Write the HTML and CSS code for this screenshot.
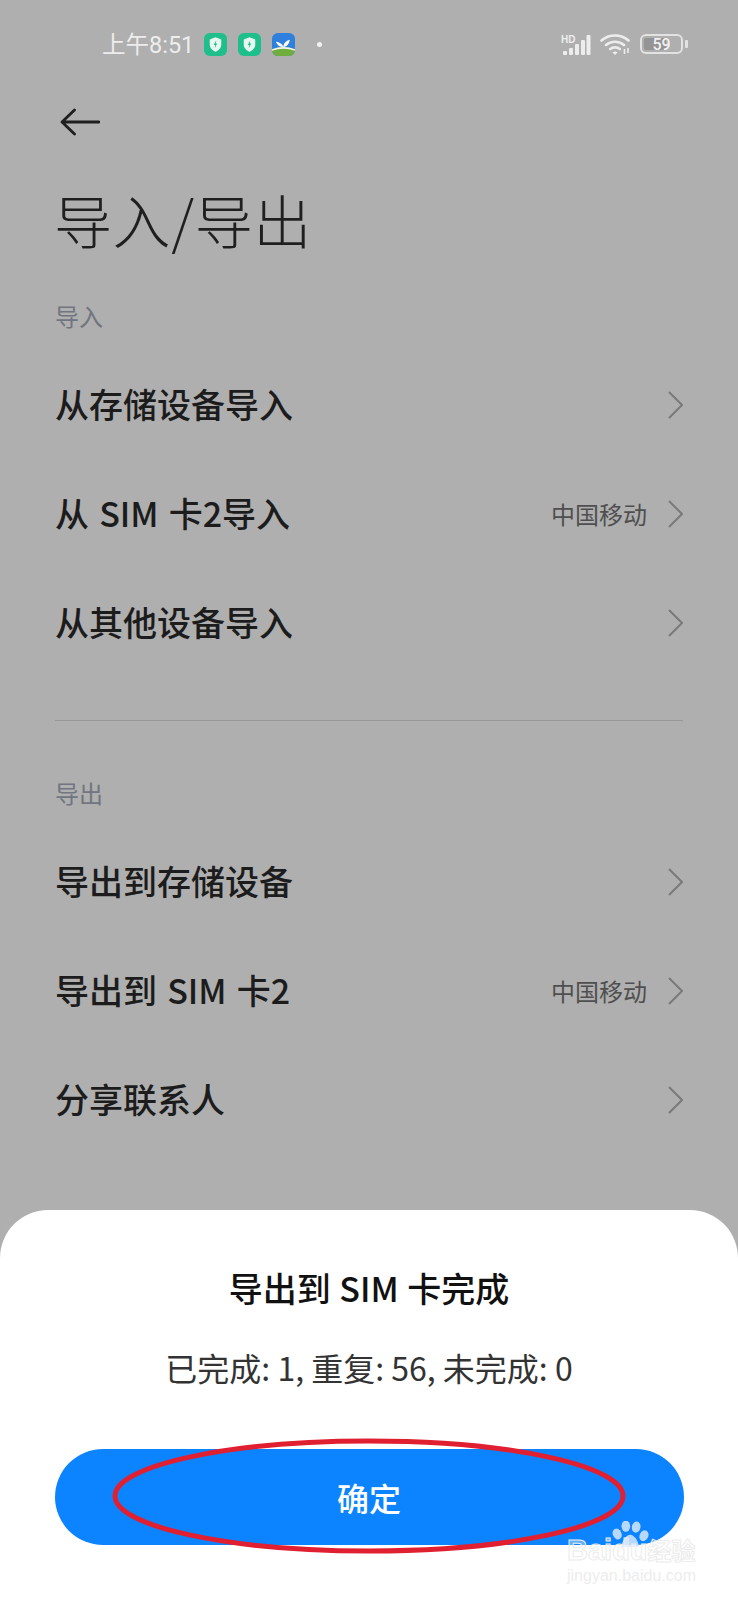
FILE: index.html
```html
<!DOCTYPE html>
<html lang="zh-CN">
<head>
<meta charset="utf-8">
<title>导入/导出</title>
<link rel="stylesheet" href="styles.css">
</head>
<body>
<div class="screen">
  <header class="status">
    <span class="time">上午8:51</span>
    <svg class="app" viewBox="0 0 24 24"><rect width="24" height="24" rx="6" fill="#1fbf8c"/><path d="M12 4.500l6 2.200v5.200c0 3.600-2.600 6-6 7.600-3.400-1.600-6-4-6-7.600V6.700z" fill="#e8f7f1"/><path d="M12.800 7.500l-2.600 5h1.500l-.5 3.500 2.600-5h-1.500z" fill="#1fbf8c"/></svg>
    <svg class="app" viewBox="0 0 24 24"><rect width="24" height="24" rx="6" fill="#1fbf8c"/><path d="M12 4.500l6 2.200v5.200c0 3.600-2.600 6-6 7.600-3.400-1.600-6-4-6-7.600V6.700z" fill="#e8f7f1"/><path d="M12.800 7.500l-2.600 5h1.500l-.5 3.500 2.600-5h-1.500z" fill="#1fbf8c"/></svg>
    <svg class="app" viewBox="0 0 24 24"><defs><clipPath id="r"><rect width="24" height="24" rx="6"/></clipPath></defs><g clip-path="url(#r)"><rect width="24" height="24" fill="#2f80dc"/><path d="M0 17q12-5 24 0v7H0z" fill="#6fae3c"/><path d="M0 17q12-5 24 0v1.500q-12-4-24 0z" fill="#f2f5ee"/><path d="M12 14.500c-1-3-4-5-8-5.500 1.500 3.500 4 5.500 8 5.500zM12 14.500c0-3 1.500-6 6.500-7.500-.5 4-2.500 7-6.500 7.500z" fill="#fff"/></g></svg>
    <span class="dot"></span>
    <span class="status-right">
      <svg class="signal" viewBox="0 0 30 21"><text x="0" y="8.500" class="hd">HD</text><rect x="2" y="17" width="4" height="4" rx="1"/><rect x="8" y="14" width="4" height="7" rx="1"/><rect x="14" y="10" width="4" height="11" rx="1"/><rect x="20" y="6" width="4" height="15" rx="1"/><rect x="25.500" y="1" width="4" height="20" rx="1"/></svg>
      <svg class="wifi" viewBox="0 0 31 22"><path d="M1.500 7.500C9 .8 21 .8 28.500 7.500M6 12c5-4.300 13-4.300 18 0M10.200 16c2.700-2.200 6.900-2.200 9.600 0" fill="none" stroke="#ededed" stroke-width="2.600" stroke-linecap="round"/><path d="M12.500 19.500c1.500-1.400 3.500-1.400 5 0L15 22z" fill="#ededed"/><path d="M24.500 16v5M28 15v5" stroke="#ededed" stroke-width="1.600"/></svg>
      <span class="battery"><span class="battery-fill"></span><span class="battery-num">59</span></span><span class="nub"></span>
    </span>
  </header>

  <div class="back">
    <svg class="back-icon" viewBox="0 0 40 28"><path d="M39 14H3M14.500 2L2 14l12.500 12" fill="none" stroke="#1f1f1f" stroke-width="2.800" stroke-linecap="round" stroke-linejoin="round"/></svg>
  </div>
  <h1 class="title">导入/导出</h1>

  <section class="group">
    <h2 class="label">导入</h2>
    <div class="row"><span class="row-name">从存储设备导入</span><svg class="chev" viewBox="0 0 15 28"><path d="M1 1l13 13L1 27"/></svg></div>
    <div class="row"><span class="row-name">从 SIM 卡2导入</span><span class="row-value">中国移动</span><svg class="chev" viewBox="0 0 15 28"><path d="M1 1l13 13L1 27"/></svg></div>
    <div class="row"><span class="row-name">从其他设备导入</span><svg class="chev" viewBox="0 0 15 28"><path d="M1 1l13 13L1 27"/></svg></div>
  </section>

  <hr class="divider">

  <section class="group">
    <h2 class="label">导出</h2>
    <div class="row"><span class="row-name">导出到存储设备</span><svg class="chev" viewBox="0 0 15 28"><path d="M1 1l13 13L1 27"/></svg></div>
    <div class="row"><span class="row-name">导出到 SIM 卡2</span><span class="row-value">中国移动</span><svg class="chev" viewBox="0 0 15 28"><path d="M1 1l13 13L1 27"/></svg></div>
    <div class="row"><span class="row-name">分享联系人</span><svg class="chev" viewBox="0 0 15 28"><path d="M1 1l13 13L1 27"/></svg></div>
  </section>

  <div class="sheet">
    <h3 class="sheet-title">导出到 SIM 卡完成</h3>
    <p class="sheet-body">已完成: 1, 重复: 56, 未完成: 0</p>
    <button class="ok">确定</button>
  </div>

  <svg class="ring" viewBox="0 0 516 120"><ellipse cx="258" cy="60" rx="254" ry="55" fill="none" stroke="#e01f30" stroke-width="5"/></svg>

  <div class="mark">
    <svg class="paw" viewBox="0 0 44 30"><g fill="#d6e8ff" fill-opacity=".85"><ellipse cx="6" cy="15" rx="5" ry="6.500" transform="rotate(-25 6 15)"/><ellipse cx="16" cy="6" rx="5" ry="6.500"/><ellipse cx="28" cy="7" rx="5" ry="6.500" transform="rotate(10 28 7)"/><ellipse cx="37" cy="17" rx="5" ry="6.500" transform="rotate(25 37 17)"/><path d="M21 16c5 0 10 8 10 14H11c0-6 5-14 10-14z"/></g></svg>
    <div class="mark-logo">Baidu<span class="mark-cn">经验</span></div>
    <div class="mark-url">jingyan.baidu.com</div>
  </div>
</div>
</body>
</html>
```
FILE: styles.css
```css
* { box-sizing: border-box; }
html, body { margin: 0; padding: 0; }
body { background: #afafaf; font-family: "Noto Sans CJK SC", "Noto Sans", sans-serif; }
.screen { position: relative; width: 738px; height: 1600px; overflow: hidden; background: #afafaf; padding: 0 55px; }

.status { display: flex; align-items: center; height: 88px; margin: 0 -5px 0 47px; color: #ededed; }
.time { font-size: 23.500px; width: 102px; padding-bottom: 3px; white-space: nowrap; font-family: "Roboto", "Noto Sans CJK SC", sans-serif; }
.app { width: 23px; height: 23px; margin-right: 11px; }
.dot { width: 5px; height: 5px; border-radius: 50%; background: #f2f2f2; margin-left: 11px; }
.status-right { display: flex; align-items: center; margin-left: auto; }
.signal { width: 30px; height: 21px; margin-right: 9px; fill: #ededed; }
.hd { font: 700 10px "Liberation Sans", sans-serif; fill: #ededed; }
.wifi { width: 31px; height: 22px; margin-right: 9px; }
.battery { position: relative; display: flex; align-items: center; justify-content: center; width: 43px; height: 20px; border: 2.500px solid #e2e2e2; border-radius: 6px; }
.battery-fill { position: absolute; left: 2px; top: 2px; bottom: 2px; width: 22px; background: #949494; border-radius: 2px; }
.battery-num { position: relative; font: 500 16px "Roboto", sans-serif; color: #f0f0f0; }
.nub { width: 3px; height: 8px; margin-left: 2px; background: #e2e2e2; border-radius: 1px; }

.back { height: 33px; margin: 20px 0 0 5px; }
.back-icon { display: block; width: 40px; height: 28px; }
.title { margin: 36px 0 0 -1px; font-size: 58px; line-height: 84px; font-weight: 300; color: #1f1f1f; letter-spacing: .6px; white-space: nowrap; }

.group { display: flex; flex-direction: column; }
.label { margin: 37px 0 16px; font-size: 24px; line-height: 36px; font-weight: 400; color: #71757f; }
.divider + .group .label { margin-top: 11px; }
.row { display: flex; align-items: center; height: 109.200px; }
.row-name { font-size: 34px; font-weight: 500; color: #1c1c1c; white-space: pre; word-spacing: 2.500px; padding-bottom: 2px; }
.row-value { margin-left: auto; font-size: 24px; color: #4f4f4f; }
.chev { width: 15px; height: 28px; margin-left: auto; fill: none; stroke: #7a7a7a; stroke-width: 2; }
.row-value + .chev { margin-left: 21px; }

.divider { height: 1px; margin: 42.400px 0 43px; border: 0; background: #989898; }

.sheet { position: absolute; left: 0; right: 0; top: 1210px; bottom: 0; display: flex; flex-direction: column; align-items: center; padding: 0 55px; background: #fff; border-radius: 48px 48px 0 0; }
.sheet-title { margin: 55px 0 0; font-size: 34px; line-height: 46px; font-weight: 500; color: #111; white-space: nowrap; word-spacing: 1px; }
.sheet-body { margin: 33px 0 0; font-size: 32px; line-height: 46px; font-weight: 400; color: #333; white-space: nowrap; }
.ok { width: 629px; height: 96px; margin-top: 59px; border: 0; border-radius: 48px; background: #0d84ff; color: #fff; font: 500 32px "Noto Sans CJK SC", sans-serif; }

.ring { position: absolute; left: 111px; top: 1436px; width: 516px; height: 120px; }

.mark { position: absolute; left: 567px; top: 1521px; width: 150px; }
.paw { display: block; width: 38px; height: 26px; margin-left: 45px; }
.mark-logo { margin-top: -13px; font: 700 29px/32px "Liberation Sans", sans-serif; color: rgba(255,255,255,.35); -webkit-text-stroke: 1px #ececec; white-space: nowrap; }
.mark-cn { font: 700 24px/32px "Noto Sans CJK SC", sans-serif; }
.mark-url { font: 400 16px/20px "Liberation Sans", sans-serif; color: #ededed; white-space: nowrap; }
```
